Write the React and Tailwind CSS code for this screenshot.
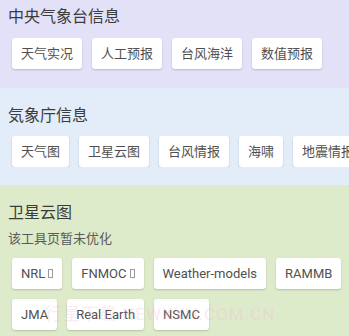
import React from "react";

const font = { fontFamily: '"Roboto", "Noto Sans CJK SC", sans-serif' };

const Btn = ({ children, box }) => (
    <div className="shrink-0 h-[31px] px-[9px] flex items-center bg-white rounded-[3px] shadow-[0_1px_2px_rgba(0,0,0,0.18)] text-[13px] text-[#505050] whitespace-nowrap">
        {children}
        {box && <span className="ml-[3px] inline-block w-[5px] h-[9px] border border-[#9a9a9a]" />}
    </div>
);

const App = () => {
    return (
        <div className="w-[349px] h-[336px] overflow-hidden relative" style={font}>
            <div className="h-[88px] bg-[#e3e1f8] pt-[7px]">
                <h2 className="px-2 text-[16px] leading-[20px] text-[#3c3c3c]">中央气象台信息</h2>
                <div className="flex gap-[10px] px-3 mt-[11px]">
                    <Btn>天气实况</Btn>
                    <Btn>人工预报</Btn>
                    <Btn>台风海洋</Btn>
                    <Btn>数值预报</Btn>
                </div>
            </div>
            <div className="h-[97px] bg-[#e2edf9] pt-[18px]">
                <h2 className="px-2 text-[16px] leading-[20px] text-[#3c3c3c]">気象庁信息</h2>
                <div className="flex gap-[10px] px-3 mt-[10px] overflow-hidden">
                    <Btn>天气图</Btn>
                    <Btn>卫星云图</Btn>
                    <Btn>台风情报</Btn>
                    <Btn>海啸</Btn>
                    <Btn>地震情报</Btn>
                </div>
            </div>
            <div className="h-[151px] bg-[#deebca] pt-[18px]">
                <h2 className="px-2 text-[16px] leading-[20px] text-[#3c3c3c]">卫星云图</h2>
                <p className="px-2 mt-[7px] text-[13px] leading-[18px] text-[#5a5a5a]">该工具页暂未优化</p>
                <div className="flex flex-wrap gap-x-[10px] gap-y-[10px] pl-3 mt-[10px]">
                    <Btn box>NRL</Btn>
                    <Btn box>FNMOC</Btn>
                    <Btn>Weather-models</Btn>
                    <Btn>RAMMB</Btn>
                    <Btn>JMA</Btn>
                    <Btn>Real Earth</Btn>
                    <Btn>NSMC</Btn>
                </div>
            </div>
            <div className="absolute left-[45px] top-[304px] text-[17px] leading-[20px] text-[#f4b8d8] opacity-30 whitespace-nowrap pointer-events-none tracking-[1px]">
                行星下载 NEWXXH.COM.CN
            </div>
        </div>
    );
};

export default App;
